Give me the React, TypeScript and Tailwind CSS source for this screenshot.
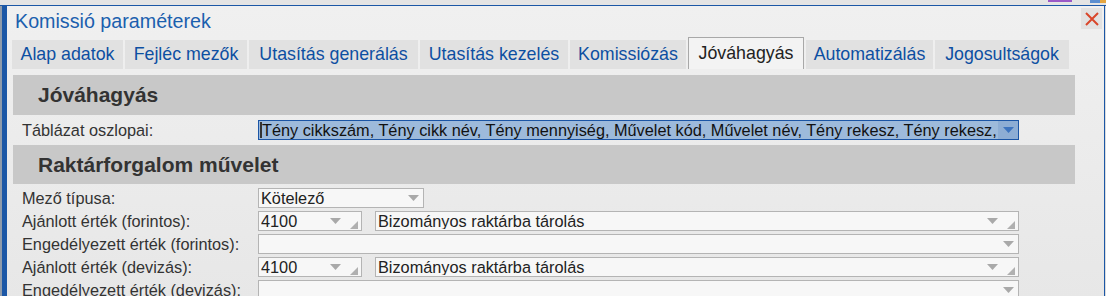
const tabs = [
  { label: "Alap adatok", w: "w-[111px]" },
  { label: "Fejléc mezők", w: "w-[122px]" },
  { label: "Utasítás generálás", w: "w-[169px]" },
  { label: "Utasítás kezelés", w: "w-[148px]" },
  { label: "Komissiózás", w: "w-[116px]" },
  { label: "Jóváhagyás", w: "w-[116px]", active: true },
  { label: "Automatizálás", w: "w-[127px]" },
  { label: "Jogosultságok", w: "w-[134px]" },
];

function Arrow({ className = "" }: { className?: string }) {
  return (
    <svg width="11" height="7" viewBox="0 0 11 7" className={className}>
      <path d="M0 0 H11 L5.5 6 Z" fill="#a9a9a9" />
    </svg>
  );
}

function Grip() {
  return (
    <svg width="8" height="8" viewBox="0 0 8 8">
      <path d="M8 0 V8 H0 Z" fill="#b0b0b0" />
    </svg>
  );
}

function Combo({
  value,
  width,
  grip,
}: {
  value?: string;
  width: string;
  grip?: boolean;
}) {
  return (
    <div
      className={`${width} flex h-[20px] items-center border border-[#b4b4b4] bg-[#f7f7f7] pl-[2px] pr-[3px]`}
    >
      <span className="flex-1 truncate text-[16.3px] leading-none text-[#222]">{value}</span>
      <Arrow className={grip ? "mr-[9px]" : "mr-[1px]"} />
      {grip && (
        <div className="mt-[7px]">
          <Grip />
        </div>
      )}
    </div>
  );
}

const rows = [
  { label: "Mező típusa:", kind: "type" },
  { label: "Ajánlott érték (forintos):", kind: "pair" },
  { label: "Engedélyezett érték (forintos):", kind: "wide" },
  { label: "Ajánlott érték (devizás):", kind: "pair" },
  { label: "Engedélyezett érték (devizás):", kind: "wide" },
];

export default function App() {
  return (
    <div
      className="relative flex h-[296px] w-[1106px] flex-col overflow-hidden bg-[#e4e4e4]"
      style={{ fontFamily: '"Liberation Sans", Arial, sans-serif' }}
    >
      {/* top strip of the desktop behind */}
      <div className="flex h-[5px] shrink-0 justify-end">
        <div className="mr-[18px] h-[2px] w-[24px] bg-[#9b59c7]" />
        <div className="h-[3px] w-[10px] bg-[#5b8ed0]" />
        <div className="h-[3px] w-[6px] bg-[#e6a640]" />
      </div>

      <div className="flex flex-1 border-t border-[#1b57a6]">
        <div className="w-[2px] bg-[#8e9bab]" />
        <div className="w-[5px] bg-[#1b57a6]" />

        <main className="flex w-[1097px] flex-col bg-gradient-to-b from-[#f0f0f0] to-[#e7e7e7]">
          <div className="flex h-[31px] shrink-0 items-start justify-between">
            <h1 className="pl-[8px] pt-[3px] text-[19.7px] leading-[24px] text-[#1b5fae]">
              Komissió paraméterek
            </h1>
            <button className="mr-[2px] mt-[2px] flex h-[21px] w-[21px] items-center justify-center bg-[#e2e2e2]">
              <svg width="14" height="14" viewBox="0 0 14 14">
                <path d="M1 1 L13 13 M13 1 L1 13" stroke="#d9472b" strokeWidth="2" />
              </svg>
            </button>
          </div>

          <div className="ml-[5px] flex h-[32px] shrink-0 items-end gap-[2px]">
            {tabs.map((t) =>
              t.active ? (
                <div
                  key={t.label}
                  className={`${t.w} flex h-[32px] items-center justify-center border border-b-0 border-[#a8a8a8] bg-[#f3f3f3] pb-[1px] text-[17.8px] text-[#222]`}
                >
                  {t.label}
                </div>
              ) : (
                <div
                  key={t.label}
                  className={`${t.w} flex h-[29px] items-center justify-center bg-[#e1e1e1] text-[17.8px] text-[#0d4fa2]`}
                >
                  {t.label}
                </div>
              ),
            )}
          </div>

          <div className="ml-[6px] mt-[6px] flex w-[1062px] flex-col">
            <div className="flex h-[40px] items-center bg-[#c8c8c8] pl-[25px] text-[21px] font-bold text-[#333]">
              Jóváhagyás
            </div>
            <div className="flex h-[30px] items-center">
              <span className="w-[245px] pl-[9px] text-[16.3px] text-[#333]">Táblázat oszlopai:</span>
              <div className="flex h-[20px] w-[761px] items-stretch border border-[#1b55a5] bg-[#9dbadb]">
                <div className="my-[1px] ml-[1px] w-[2px] bg-[#333]" />
                <span className="flex-1 overflow-hidden whitespace-nowrap pr-[6px] text-[16.3px] leading-[18px] text-[#111]">
                  Tény cikkszám, Tény cikk név, Tény mennyiség, Művelet kód, Művelet név, Tény rekesz, Tény rekesz, Tény
                </span>
                <div className="flex w-[20px] items-center justify-center bg-[#8dadd4]">
                  <svg width="11" height="7" viewBox="0 0 11 7">
                    <path d="M0 0 H11 L5.5 6 Z" fill="#3d74bf" />
                  </svg>
                </div>
              </div>
            </div>
            <div className="flex h-[39px] items-center bg-[#c8c8c8] pl-[25px] text-[21px] font-bold text-[#333]">
              Raktárforgalom művelet
            </div>

            <div className="flex flex-col gap-[3px] pt-[4px]">
              {rows.map((r) => (
                <div key={r.label} className="flex h-[20px] items-center">
                  <span className="w-[245px] shrink-0 pl-[9px] text-[16.3px] text-[#333]">{r.label}</span>
                  {r.kind === "type" && <Combo value="Kötelező" width="w-[166px]" />}
                  {r.kind === "pair" && (
                    <div className="flex gap-[13px]">
                      <Combo value="4100" width="w-[104px]" grip />
                      <Combo value="Bizományos raktárba tárolás" width="w-[644px]" grip />
                    </div>
                  )}
                  {r.kind === "wide" && <Combo width="w-[761px]" />}
                </div>
              ))}
            </div>
          </div>
        </main>

        <div className="w-[1px] bg-[#1b57a6]" />
        <div className="w-[1px] bg-[#dcdcdc]" />
      </div>
    </div>
  );
}
